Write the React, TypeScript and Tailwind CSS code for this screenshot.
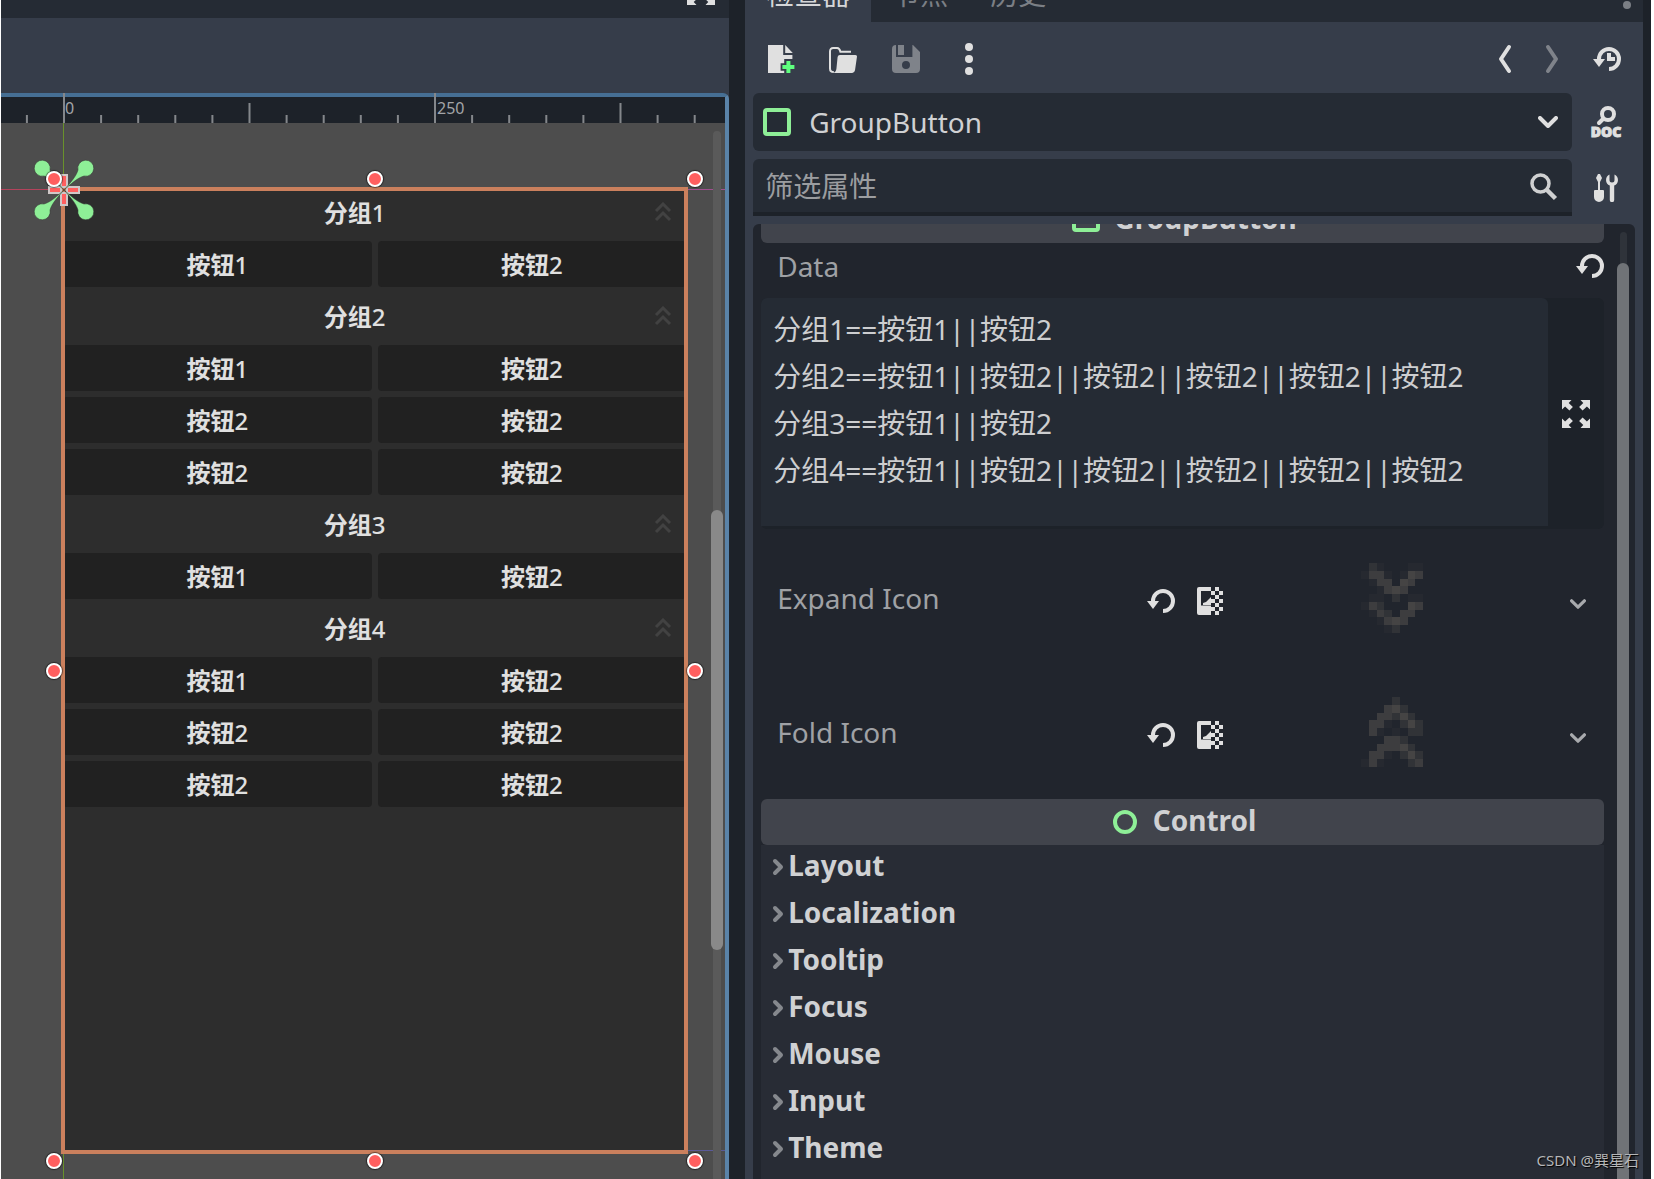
import { useState } from 'react';
import type { ReactNode } from 'react';

interface Group {
  title: string;
  index: number;
  buttons: number[];
}

interface IconProps {
  className?: string;
}

const groups: Group[] = [
  { title: '分组', index: 1, buttons: [1, 2] },
  { title: '分组', index: 2, buttons: [1, 2, 2, 2, 2, 2] },
  { title: '分组', index: 3, buttons: [1, 2] },
  { title: '分组', index: 4, buttons: [1, 2, 2, 2, 2, 2] },
];

const sections = ['Layout', 'Localization', 'Tooltip', 'Focus', 'Mouse', 'Input', 'Theme'];

const initialData = `分组1==按钮1||按钮2
分组2==按钮1||按钮2||按钮2||按钮2||按钮2||按钮2
分组3==按钮1||按钮2
分组4==按钮1||按钮2||按钮2||按钮2||按钮2||按钮2`;

// One digit per pixel: 0 is empty, 4 is the strongest
const expandPixels = [
  '02100011',
  '13310143',
  '01330430',
  '00134300',
  '01102011',
  '13200043',
  '01320330',
  '00134300',
  '00012000',
];
const foldPixels = [
  '00002000',
  '00034200',
  '00332420',
  '03310242',
  '03101022',
  '00033200',
  '00333420',
  '03310242',
  '13100023',
];
const pixelOpacity = [0, 0.15, 0.45, 0.8, 1];

function ReloadIcon({ className }: IconProps) {
  return (
    <svg viewBox="0 0 16 16" className={className} fill="currentColor">
      <path d="M9 2a6 6 0 0 0-6 6H1l3 4 3-4H5a4 4 0 1 1 4 4v2A6 6 0 0 0 9 2z" />
    </svg>
  );
}

function HistoryIcon({ className }: IconProps) {
  return (
    <svg viewBox="0 0 16 16" className={className} fill="currentColor">
      <path d="M9 2a6 6 0 0 0-6 6H1l3 4 3-4H5a4 4 0 1 1 4 4v2A6 6 0 0 0 9 2zM8 5v4h4V7h-2V5z" />
    </svg>
  );
}

function NewFileIcon({ className }: IconProps) {
  return (
    <svg viewBox="0 0 16 16" className={className}>
      <path
        fill="#e0e0e0"
        d="M2 1h7.6v5h4.6v2h-4.1v2.1H8.3v3.8h1.8V15H2zM10.6 1v4h3.8z"
      />
      <path fill="#5fff7f" d="M11.2 9h2v2h2v2h-2v2h-2v-2h-2v-2h2z" />
    </svg>
  );
}

function FolderIcon({ className }: IconProps) {
  return (
    <svg viewBox="0 0 16 16" className={className}>
      <path
        fill="none"
        stroke="currentColor"
        d="M3.4 14.5c-1.4 0-1.9-.7-1.9-1.8V4.3c0-1.2.6-1.8 1.6-1.8h2c1 0 1.3.6 1.6 1.9H12"
      />
      <path
        fill="currentColor"
        d="M6.4 6h7.8q.9 0 .8.8l-1 6.8q-.3 1.4-1.4 1.4H3q1.4-.3 1.7-2l.6-6q.2-1 1.1-1z"
      />
    </svg>
  );
}

function SaveIcon({ className }: IconProps) {
  return (
    <svg viewBox="0 0 16 16" className={className} fill="currentColor">
      <path
        fillRule="evenodd"
        d="M3 1a2 2 0 0 0-2 2v10a2 2 0 0 0 2 2h10a2 2 0 0 0 2-2V4.5L11.500 1h-.3v6H3zM8 9a2 2 0 1 1 0 4 2 2 0 0 1 0-4z"
      />
      <path d="M4 1h3v5H4z" />
    </svg>
  );
}

function DotsIcon({ className }: IconProps) {
  return (
    <svg viewBox="0 0 16 16" className={className} fill="currentColor">
      <circle cx="8" cy="2" r="2" />
      <circle cx="8" cy="8" r="2" />
      <circle cx="8" cy="14" r="2" />
    </svg>
  );
}

function AngleIcon({ className, right }: IconProps & { right?: boolean }) {
  return (
    <svg
      viewBox="0 0 16 32"
      className={className}
      fill="none"
      stroke="currentColor"
      strokeWidth="4"
      strokeLinecap="round"
      strokeLinejoin="round"
    >
      <path d={right ? 'M4 4l8 12-8 12' : 'M12 4L4 16l8 12'} />
    </svg>
  );
}

function ChevronIcon({ className }: IconProps) {
  return (
    <svg
      viewBox="0 0 20 12"
      className={className}
      fill="none"
      stroke="currentColor"
      strokeWidth="4"
      strokeLinecap="round"
      strokeLinejoin="round"
    >
      <path d="M2 2l8 8 8-8" />
    </svg>
  );
}

function ArrowIcon({ className }: IconProps) {
  return (
    <svg
      viewBox="0 0 12 18"
      className={className}
      fill="none"
      stroke="currentColor"
      strokeWidth="4"
      strokeLinecap="round"
      strokeLinejoin="round"
    >
      <path d="M3 3l6 6-6 6" />
    </svg>
  );
}

function DocIcon({ className }: IconProps) {
  return (
    <svg viewBox="0 0 32 32" className={className}>
      <circle cx="18" cy="8" r="6" fill="none" stroke="currentColor" strokeWidth="4" />
      <path d="M13 13l-4 4" stroke="currentColor" strokeWidth="4" strokeLinecap="round" />
      <text
        x="16"
        y="31"
        textAnchor="middle"
        fill="currentColor"
        stroke="currentColor"
        className="font-['Noto_Sans',sans-serif] text-[14px] font-black"
      >
        DOC
      </text>
    </svg>
  );
}

function ToolsIcon({ className }: IconProps) {
  return (
    <svg viewBox="0 0 28 28" className={className} fill="currentColor">
      <path d="M6 0h2l2 4-2 4v8h3q1 0 1 1v6a5 5 0 0 1-10 0v-6q0-1 1-1h3V8L4 4z" />
      <path d="M17.5.6V6a2.500 2.500 0 0 0 5 0V.6a6 6 0 0 1-.3 11V26a2 2 0 0 1-4.400 0V11.600a6 6 0 0 1-.3-11z" />
    </svg>
  );
}

function SearchIcon({ className }: IconProps) {
  return (
    <svg viewBox="0 0 28 28" className={className} fill="none" stroke="currentColor">
      <circle cx="10.5" cy="10.5" r="8.5" strokeWidth="3.5" />
      <path d="M16.5 16.5l9 9" strokeWidth="4.5" />
    </svg>
  );
}

function DistractionIcon({ className }: IconProps) {
  const arrow = 'M0 0h9.500L6.700 2.900l4.200 4.200-3.500 3.500-4.300-4.200L0 9.500z';
  return (
    <svg viewBox="0 0 28 28" className={className} fill="currentColor">
      <path d={arrow} />
      <path d={arrow} transform="translate(28 0) scale(-1 1)" />
      <path d={arrow} transform="translate(0 28) scale(1 -1)" />
      <path d={arrow} transform="translate(28 28) scale(-1 -1)" />
    </svg>
  );
}

function TextureIcon({ className }: IconProps) {
  return (
    <svg viewBox="0 0 26 28" className={className} fill="currentColor">
      <path d="M2 0h12v4H4v14.500h10V28H2q-2 0-2-2V2q0-2 2-2z" />
      <path d="M6 18v-2l3-1 5-5v8z" />
      <path d="M18 0h4v4h-4zM14 4h4v4h-4zM22 4h4v4h-4zM18 8h4v4h-4zM14 12h4v4h-4zM22 12h4v4h-4zM18 16h4v4h-4zM14 20h4v4h-4zM22 20h4v4h-4zM18 24h4v4h-4z" />
    </svg>
  );
}

function FoldIcon({ className }: IconProps) {
  return (
    <svg
      viewBox="0 0 18 20"
      className={className}
      fill="none"
      stroke="currentColor"
      strokeWidth="3"
    >
      <path d="M2 9l7-7 7 7M2 18l7-7 7 7" />
    </svg>
  );
}

function PixelIcon({ pixels }: { pixels: string[] }) {
  return (
    <svg viewBox="0 0 8 9" className="h-[70px] w-[62px]" shapeRendering="crispEdges">
      {pixels.map((row, y) =>
        row.split('').map((level, x) => (
          <rect
            key={`${x}-${y}`}
            x={x}
            y={y}
            width="1"
            height="1"
            fill="#454444"
            opacity={pixelOpacity[Number(level)]}
          />
        ))
      )}
    </svg>
  );
}

function ControlSquare() {
  return <span className="block size-7 shrink-0 rounded border-4 border-[#8eef97]" />;
}

function IconButton({
  label,
  className = '',
  disabled,
  children,
}: {
  label: string;
  className?: string;
  disabled?: boolean;
  children: ReactNode;
}) {
  return (
    <button
      type="button"
      aria-label={label}
      disabled={disabled}
      className={`flex shrink-0 items-center justify-center ${className}`}
    >
      {children}
    </button>
  );
}

function Ruler() {
  const ticks = Array.from({ length: 19 }, (_, i) => i - 1);
  const step = 37.1;

  return (
    <svg className="absolute -top-1 left-0 h-[30px] w-full" fill="#84878b">
      {ticks.map((tick) => {
        const top = tick % 10 === 0 ? 0 : tick % 5 === 0 ? 10 : 22;
        return (
          <rect key={tick} x={62 + tick * step} y={top} width="2" height={30 - top} />
        );
      })}
      <g fill="#a3a5a8" className="font-['Noto_Sans',sans-serif] text-base">
        <text x="64" y="21">0</text>
        <text x="436" y="21">250</text>
      </g>
    </svg>
  );
}

function Handle({ className }: IconProps) {
  return (
    <span
      className={`absolute size-4 rounded-full border-2 border-white bg-[#ff5f5f] shadow-[0_0_1px_1px_rgba(0,0,0,0.5)] ${className}`}
    />
  );
}

function Anchors() {
  const leaf = 'M32 32C26 25 20 19 18 12A8 8 0 1 0 12 18C19 20 25 26 32 32z';
  return (
    <svg viewBox="0 0 64 64" className="absolute -top-[31px] -left-[31px] size-16 overflow-visible">
      <g fill="#ff5f5f" stroke="#cfc7c7" strokeWidth="2">
        <path d="M29 17h6v12h-6zM29 35h6v12h-6zM17 29h12v6H17zM35 29h12v6H35z" />
      </g>
      <g fill="#8eef97" stroke="#333" strokeOpacity="0.5">
        <path d={leaf} />
        <path d={leaf} transform="translate(64 0) scale(-1 1)" />
        <path d={leaf} transform="translate(0 64) scale(1 -1)" />
        <path d={leaf} transform="translate(64 64) scale(-1 -1)" />
      </g>
    </svg>
  );
}

function GroupPanel() {
  return (
    <div className="flex flex-col gap-[6px] text-2xl font-bold text-[#e0e0e0]">
      {groups.map((group) => (
        <section key={group.index} className="flex flex-col gap-[6px]">
          <button type="button" className="relative h-[46px] pt-[2px] pr-10">
            {group.title}
            <span className="font-medium">{group.index}</span>
            <FoldIcon className="absolute top-[13px] right-[14px] h-5 w-[18px] text-[#424242]" />
          </button>
          <div className="grid grid-cols-2 gap-[6px]">
            {group.buttons.map((n, i) => (
              <button key={i} type="button" className="h-[46px] rounded bg-[#212121] pt-[2px]">
                按钮<span className="font-medium">{n}</span>
              </button>
            ))}
          </div>
        </section>
      ))}
    </div>
  );
}

function Viewport() {
  return (
    <section className="flex min-h-0 flex-col bg-[#363d4a]">
      <header className="flex h-[18px] shrink-0 items-end justify-end overflow-hidden bg-[#252b34] pr-[14px]">
        <IconButton label="Distraction free mode" className="mb-[13px] text-[#e0e0e0]">
          <DistractionIcon className="size-7" />
        </IconButton>
      </header>
      <div className="h-[75px] shrink-0" />
      <div className="relative flex min-h-0 flex-1 flex-col rounded-tr-md border-t-4 border-r-4 border-t-[#466f94] border-r-[#5a83a8] bg-[#4d4d4d]">
        <div className="relative h-[26px] shrink-0 bg-[#1d2229]">
          <Ruler />
        </div>
        <div className="relative flex min-h-0 flex-1 flex-col pt-[66px] pr-[39px] pb-[27px] pl-[62px]">
          <span className="absolute inset-y-0 left-[62px] w-px bg-[#69912b]" />
          <span className="absolute top-[66px] left-0 h-px w-[62px] bg-[#b3435c]" />
          <span className="absolute top-[66px] right-0 h-px w-[39px] bg-[#a04f8f]" />
          <span className="absolute right-0 bottom-7 h-px w-[39px] bg-[#5a5a98]" />
          <div className="relative flex-1 bg-[#2d2d2d]">
            <GroupPanel />
            <span className="pointer-events-none absolute -inset-[2px] border-4 border-[#cb805d]" />
            <Anchors />
            <Handle className="-top-[18px] -left-[17px]" />
            <Handle className="-top-[18px] left-1/2 -translate-x-1/2" />
            <Handle className="-top-[18px] -right-[17px]" />
            <Handle className="top-1/2 -left-[17px] -translate-y-1/2" />
            <Handle className="top-1/2 -right-[17px] -translate-y-1/2" />
            <Handle className="-bottom-[17px] -left-[17px]" />
            <Handle className="-bottom-[17px] left-1/2 -translate-x-1/2" />
            <Handle className="-bottom-[17px] -right-[17px]" />
          </div>
          <span className="absolute top-2 right-1 bottom-0 w-2 rounded-t-full bg-[#5a5a5a]" />
          <span className="absolute top-[387px] right-[2px] h-[440px] w-3 rounded-full bg-[#898989]" />
        </div>
      </div>
    </section>
  );
}

function TextureRow({ label, pixels }: { label: string; pixels: string[] }) {
  return (
    <div className="flex h-[134px] items-center">
      <span className="flex-1 pl-4 text-[#9fa1a5]">{label}</span>
      <div className="flex w-[459px] items-center">
        <IconButton label={`Revert ${label}`} className="mt-[6px] text-[#e0e0e0]">
          <ReloadIcon className="size-8" />
        </IconButton>
        <span className="mt-[6px] ml-5 text-[#e0e0e0]">
          <TextureIcon className="h-7 w-[26px]" />
        </span>
        <button
          type="button"
          aria-label={label}
          className="flex flex-1 justify-center pr-2"
        >
          <PixelIcon pixels={pixels} />
        </button>
        <IconButton label={`${label} menu`} className="mt-3 mr-[18px] text-[#a8aaad]">
          <ChevronIcon className="h-[10px] w-4" />
        </IconButton>
      </div>
    </div>
  );
}

function Inspector() {
  const [data, setData] = useState(initialData);
  const [filter, setFilter] = useState('');

  return (
    <section className="flex min-h-0 min-w-0 flex-col bg-[#363d4a]">
      <nav className="flex h-[22px] shrink-0 items-end overflow-hidden bg-[#252b34] leading-10 text-[#7b7f85]">
        <button type="button" className="h-12 bg-[#363d4a] px-[21px] pb-2 text-[#d5d6d8]">
          检查器
        </button>
        <button type="button" className="h-12 px-[21px] pb-2">节点</button>
        <button type="button" className="h-12 px-[21px] pb-2">历史</button>
        <IconButton label="Dock options" className="mr-3 mb-[13px] ml-auto">
          <span className="size-2 rounded-full bg-[#7b7f85]" />
        </IconButton>
      </nav>

      <div className="flex h-[71px] shrink-0 items-center pt-[3px] pr-5 pl-[19px] text-[#e0e0e0]">
        <IconButton label="New resource" className="mr-[31px]">
          <NewFileIcon className="size-8" />
        </IconButton>
        <IconButton label="Load resource" className="mr-[31px]">
          <FolderIcon className="size-8" />
        </IconButton>
        <IconButton label="Save resource" className="mr-[31px] text-[#7f838a]" disabled>
          <SaveIcon className="size-8" />
        </IconButton>
        <IconButton label="More options">
          <DotsIcon className="size-8" />
        </IconButton>
        <IconButton label="Previous object" className="mr-[31px] ml-auto">
          <AngleIcon className="h-8 w-4" />
        </IconButton>
        <IconButton label="Next object" className="mr-[31px] text-[#7f838a]" disabled>
          <AngleIcon className="h-8 w-4" right />
        </IconButton>
        <IconButton label="History">
          <HistoryIcon className="size-8" />
        </IconButton>
      </div>

      <div className="flex shrink-0 flex-col gap-2 px-2 text-[#d0d1d3]">
        <div className="flex">
          <div className="relative h-[58px] flex-1">
            <select
              aria-label="Object"
              className="h-full w-full appearance-none rounded-md bg-[#252b34] pl-14 outline-none"
            >
              <option>GroupButton</option>
            </select>
            <span className="pointer-events-none absolute top-[15px] left-[10px]">
              <ControlSquare />
            </span>
            <ChevronIcon className="pointer-events-none absolute top-[23px] right-[14px] h-3 w-5 text-[#e0e0e0]" />
          </div>
          <IconButton label="Open documentation" className="ml-[18px] w-[45px] pr-3 text-[#e0e0e0]">
            <DocIcon className="size-8" />
          </IconButton>
        </div>
        <div className="flex">
          <div className="relative h-[57px] flex-1">
            <input
              type="text"
              aria-label="筛选属性"
              placeholder="筛选属性"
              value={filter}
              onChange={(e) => setFilter(e.target.value)}
              className="h-full w-full rounded-t-md border-b-4 border-[#1d2229] bg-[#252b34] px-3 outline-none placeholder:text-[#9b9da0]"
            />
            <SearchIcon className="pointer-events-none absolute top-[14px] right-[14px] size-7 text-[#cfd0d1]" />
          </div>
          <IconButton label="Property options" className="ml-[18px] w-[45px] pr-3 text-[#e0e0e0]">
            <ToolsIcon className="size-7" />
          </IconButton>
        </div>
      </div>

      <div className="mx-2 mt-2 flex min-h-0 flex-1 overflow-hidden rounded-t-md bg-[#21252d]">
        <div className="-mt-[27px] min-w-0 flex-1 pl-2">
          <h2 className="flex h-[46px] items-center justify-center gap-[14px] rounded-md bg-[#41444c] pb-1 pl-1 font-bold text-[#d0d1d3]">
            <ControlSquare />
            GroupButton
          </h2>
          <div className="flex h-[55px] items-center justify-between pb-[10px] pl-4">
            <label htmlFor="data" className="text-[#9fa1a5]">Data</label>
            <IconButton label="Revert Data" className="-mr-[2px] text-[#e0e0e0]">
              <ReloadIcon className="size-8" />
            </IconButton>
          </div>
          <div className="flex h-[231px] rounded-md bg-[#1d2229]">
            <textarea
              id="data"
              value={data}
              onChange={(e) => setData(e.target.value)}
              spellCheck={false}
              className="h-[228px] flex-1 resize-none overflow-hidden rounded-t-md bg-[#252b34] px-3 pt-2 leading-[47px] text-[#cdced0] outline-none"
            />
            <IconButton label="Edit text in a larger window" className="w-14 text-[#e0e0e0]">
              <DistractionIcon className="size-7" />
            </IconButton>
          </div>
          <div className="pt-[2px]">
            <TextureRow label="Expand Icon" pixels={expandPixels} />
            <TextureRow label="Fold Icon" pixels={foldPixels} />
          </div>
          <h2 className="flex h-[46px] items-center justify-center gap-4 rounded-md bg-[#41444c] pb-1 pl-1 font-bold text-[#d0d1d3]">
            <span className="mt-1 block size-6 rounded-full border-4 border-[#8eef97]" />
            Control
          </h2>
          <ul className="h-full bg-[#282c35] font-bold text-[#d0d1d3]">
            {sections.map((name) => (
              <li key={name}>
                <button
                  type="button"
                  className="flex h-[47px] w-full items-center gap-1 pb-2 pl-[11px] text-left"
                >
                  <ArrowIcon className="mt-1 h-[18px] w-3 text-[#85888d]" />
                  {name}
                </button>
              </li>
            ))}
          </ul>
        </div>
        <div className="relative w-[31px] shrink-0">
          <span className="absolute top-2 left-4 h-20 w-[7px] rounded-full bg-[#2f333a]" />
          <span className="absolute top-[39px] -bottom-4 left-[13px] w-3 rounded-full bg-[#707377]" />
        </div>
      </div>
    </section>
  );
}

export default function App() {
  return (
    <main className="relative grid h-screen grid-cols-[minmax(0,73fr)_minmax(0,90fr)] grid-rows-[minmax(0,1fr)] gap-4 overflow-hidden border-r-[3px] border-l border-white bg-[#1d2229] pr-2 font-['Noto_Sans','Noto_Sans_CJK_SC',sans-serif] text-[28px]">
      <Viewport />
      <Inspector />
      <p className="absolute right-3 bottom-2 text-[15px] text-[#b5b6b8] [text-shadow:1px_1px_1px_#000]">
        CSDN @巽星石
      </p>
    </main>
  );
}
